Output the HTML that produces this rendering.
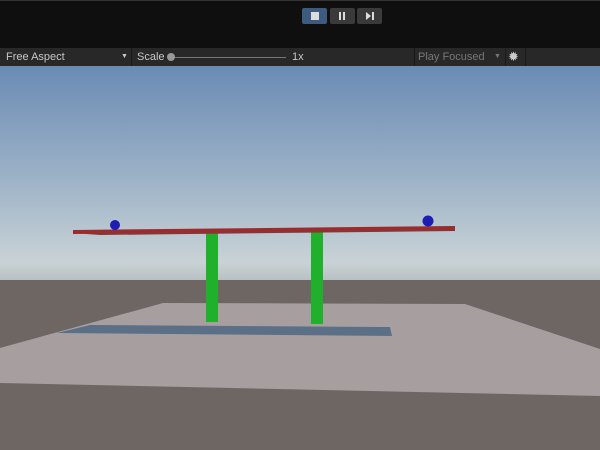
<!DOCTYPE html>
<html><head><style>
body{margin:0;width:600px;height:450px;overflow:hidden;background:#0f0f0f;font-family:"Liberation Sans",sans-serif;}
.top{position:absolute;left:0;top:0;width:600px;height:48px;background:#0f0f0f;border-top:1px solid #333;box-sizing:border-box}
.btn{position:absolute;top:7px;width:25px;height:16px;background:#3a3a3a;border-radius:2px}
.bar{position:absolute;left:0;top:48px;width:600px;height:18px;background:#282828;font-size:11px;color:#c8c8c8;line-height:18px}
.sep{position:absolute;top:48px;width:1px;height:18px;background:#1a1a1a}
</style></head><body>
<div class="top">
<div class="btn" style="left:302px;background:#3d5a80"><div style="position:absolute;left:9px;top:4px;width:8px;height:8px;background:#ddd"></div></div>
<div class="btn" style="left:330px"><div style="position:absolute;left:9px;top:4px;width:2px;height:8px;background:#ddd"></div><div style="position:absolute;left:13px;top:4px;width:2px;height:8px;background:#ddd"></div></div>
<div class="btn" style="left:357px"><svg width="25" height="16"><path d="M9 4 L14 8 L9 12Z" fill="#ddd"/><rect x="15" y="4" width="2" height="8" fill="#ddd"/></svg></div>
</div>
<div class="bar">
<span style="position:absolute;left:6px">Free Aspect</span>
<span style="position:absolute;left:121px;font-size:7px">▼</span>
<span style="position:absolute;left:137px">Scale</span>
<div style="position:absolute;left:167px;top:5px;width:8px;height:8px;border-radius:50%;background:#999"></div>
<div style="position:absolute;left:175px;top:9px;width:111px;height:1px;background:#777"></div>
<span style="position:absolute;left:292px">1x</span>
<span style="position:absolute;left:418px;color:#777">Play Focused</span>
<span style="position:absolute;left:494px;font-size:7px;color:#777">▼</span>
<span style="position:absolute;left:508px;color:#ccc;font-size:13px">✹</span>
</div>
<div class="sep" style="left:131px"></div><div class="sep" style="left:414px"></div><div class="sep" style="left:505px"></div><div class="sep" style="left:525px"></div>
<svg style="position:absolute;left:0;top:66px" width="600" height="384" viewBox="0 66 600 384">
<defs><linearGradient id="sky" x1="0" y1="66" x2="0" y2="280" gradientUnits="userSpaceOnUse">
<stop offset="0" stop-color="#6a8bb4"/><stop offset="0.55" stop-color="#9fb4c8"/><stop offset="0.92" stop-color="#c9d3d6"/><stop offset="1" stop-color="#b8c0c2"/></linearGradient></defs>
<rect x="0" y="66" width="600" height="214" fill="url(#sky)"/>
<rect x="0" y="280" width="600" height="170" fill="#6d6662"/>
<polygon points="163,303 465,304 600,349 600,396 0,383 0,348" fill="#a79f9f"/>
<polygon points="57,333 90,325 390,327 392,336" fill="#5b6f86"/>
<rect x="206" y="233" width="12" height="89" fill="#21b02b"/>
<rect x="311" y="232" width="12" height="92" fill="#21b02b"/>
<polygon points="73,230 455,226 455,230 73,234" fill="#9e2a2c"/>
<polygon points="73,233 455,229 455,231 100,235" fill="#8a3535"/>
<circle cx="115" cy="225" r="5" fill="#1d1db4"/>
<circle cx="428" cy="221" r="5.5" fill="#1d1db4"/>
</svg>
</body></html>
